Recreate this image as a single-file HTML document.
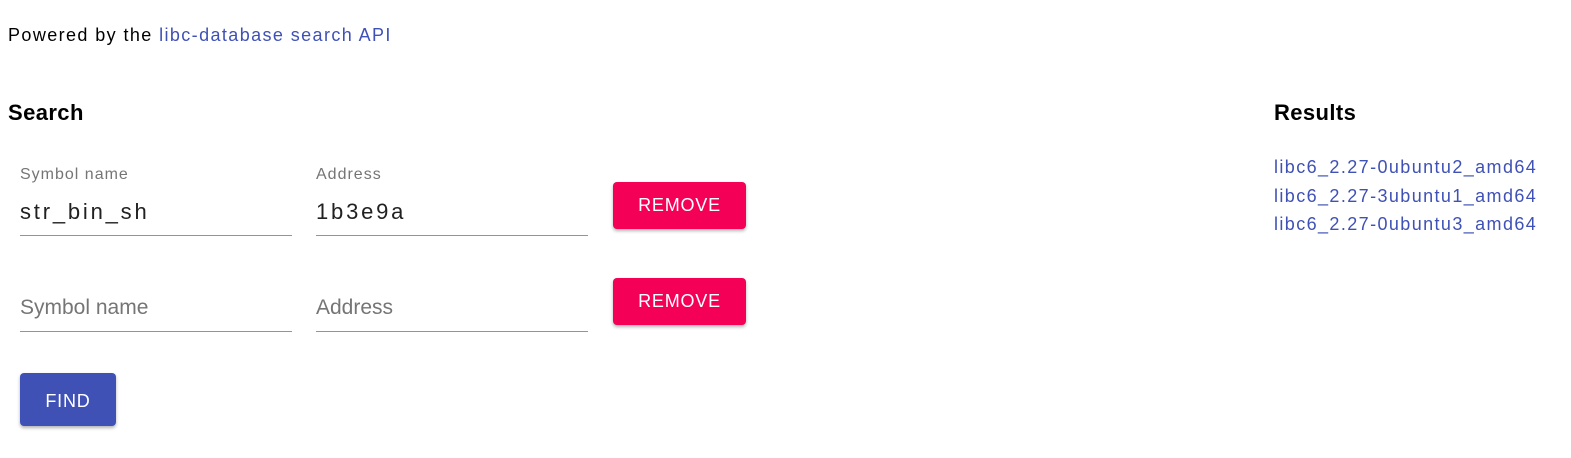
<!DOCTYPE html>
<html><head><meta charset="utf-8"><style>
body{margin:0;width:1571px;height:458px;background:#fff;font-family:"Liberation Sans",sans-serif;position:relative;overflow:hidden}
.a{position:absolute;white-space:nowrap}
.l{color:#3f51b5}
.h{font-weight:bold;font-size:22px;color:#000;letter-spacing:.4px}
.lab{font-size:16px;color:#757575;letter-spacing:1px}
.val{font-size:22px;color:#212121;letter-spacing:2.8px}
.ph{font-size:21px;color:#757575}
.ul{position:absolute;height:1px;background:#949494;width:272px}
.btn{position:absolute;border-radius:4px;color:#fff;font-size:18px;display:flex;align-items:center;justify-content:center;box-shadow:0 2px 3px rgba(0,0,0,.3);letter-spacing:.8px}
.r{background:#f50057;width:133px;height:47px}
</style></head><body>
<div class="a" style="left:8px;top:25px;font-size:18px;color:#000;letter-spacing:1.4px">Powered by the <span class="l">libc-database search API</span></div>
<div class="a h" style="left:8px;top:100px">Search</div>
<div class="a h" style="left:1274px;top:100px">Results</div>
<div class="a lab" style="left:20px;top:166px">Symbol name</div>
<div class="a lab" style="left:316px;top:166px">Address</div>
<div class="a val" style="left:20px;top:199px">str_bin_sh</div>
<div class="a val" style="left:316px;top:199px">1b3e9a</div>
<div class="ul" style="left:20px;top:235px"></div>
<div class="ul" style="left:316px;top:235px"></div>
<div class="btn r" style="left:613px;top:182px">REMOVE</div>
<div class="a ph" style="left:20px;top:296px">Symbol name</div>
<div class="a ph" style="left:316px;top:296px">Address</div>
<div class="ul" style="left:20px;top:331px"></div>
<div class="ul" style="left:316px;top:331px"></div>
<div class="btn r" style="left:613px;top:278px">REMOVE</div>
<div class="btn" style="left:20px;top:373px;width:96px;height:53px;background:#3f51b5;padding-top:4px;box-sizing:border-box">FIND</div>
<div class="a l" style="left:1274px;top:153px;font-size:18px;line-height:28.5px;letter-spacing:1.4px">libc6_2.27-0ubuntu2_amd64<br>libc6_2.27-3ubuntu1_amd64<br>libc6_2.27-0ubuntu3_amd64</div>
</body></html>
